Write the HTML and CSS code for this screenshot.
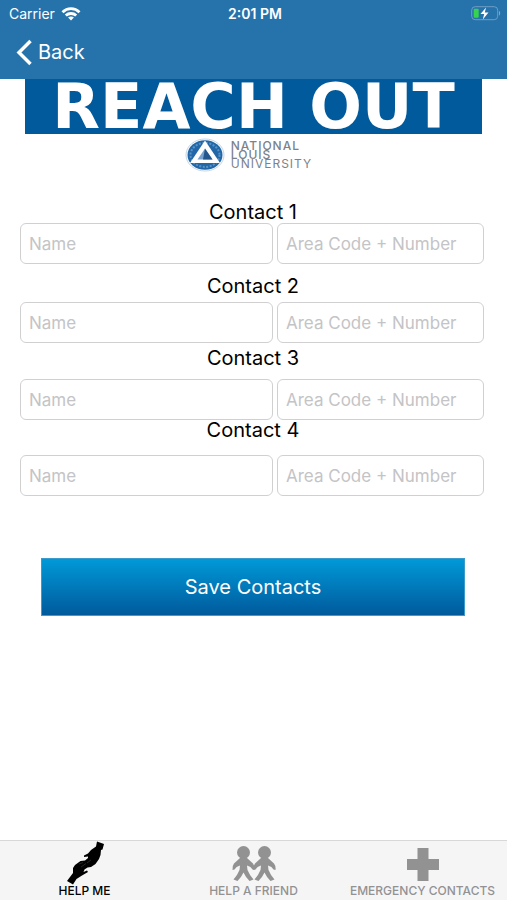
FILE: index.html
```html
<!DOCTYPE html>
<html lang="en">
<head>
<meta charset="utf-8">
<meta name="viewport" content="width=device-width, initial-scale=1">
<title>Reach Out</title>
<link rel="stylesheet" href="styles.css">
</head>
<body>
<header class="top">
  <div class="status">
    <span class="carrier">Carrier
      <svg width="20" height="14" viewBox="0 0 20 14" aria-hidden="true"><g fill="none" stroke="#fff" stroke-width="2.800"><path d="M1.500 5.200C6.300.5 13.700.5 18.500 5.200"/><path d="M4.800 8.600C7.700 5.800 12.300 5.800 15.200 8.600"/></g><path fill="#fff" d="M7.100 10.600C8.800 9.200 11.200 9.200 12.900 10.600L10 13.500Z"/></svg>
    </span>
    <time class="clock">2:01 PM</time>
    <svg class="battery" width="30" height="15" viewBox="0 0 30 15" aria-hidden="true"><rect x=".7" y=".7" width="26" height="13" rx="3.500" fill="none" stroke="#6f9dc4"/><path d="M28 5v4.500c1.500-.5 1.500-4 0-4.500Z" fill="#7fa9cc"/><rect x="2.700" y="2.700" width="5" height="9" rx="1" fill="#35d350"/><path d="M15 1.500 9.500 8h3.700l-1.400 5.500L17.500 6.500h-3.700Z" fill="#fff"/></svg>
  </div>
  <nav><a class="back" href="#"><svg width="17" height="27" viewBox="0 0 17 27" aria-hidden="true"><path d="M14.500 2 3 13.500 14.500 25" fill="none" stroke="#fff" stroke-width="3.500"/></svg>Back</a></nav>
</header>
<main>
  <h1 class="banner">REACH OUT</h1>
  <div class="brand">
    <svg width="40" height="34" viewBox="0 0 40 34" aria-hidden="true"><ellipse cx="20" cy="17" rx="19" ry="16" fill="#fff" stroke="#c3d6e6"/><ellipse cx="20" cy="17" rx="17.500" ry="14.700" fill="#2268a8"/><ellipse cx="20" cy="17" rx="14.500" ry="12" fill="none" stroke="#5c92c3" stroke-width="2" stroke-dasharray="2 1.500"/><path d="M20 2.500 35 25H5Z" fill="#fff"/><path d="M20 10.500 27.500 21.500H12.500Z" fill="#78a3ce"/><path d="M20 10.500 27.500 21.500H18Z" fill="#25578f"/></svg>
    <p class="brand-name"><span class="strong">NATIONAL</span><span class="strong">LOUIS</span><span>UNIVERSITY</span></p>
  </div>
  <form class="contacts">
    <fieldset class="contact">
      <legend>Contact 1</legend>
      <div class="fields"><input type="text" placeholder="Name" aria-label="Contact 1 name"><input type="tel" placeholder="Area Code + Number" aria-label="Contact 1 number"></div>
    </fieldset>
    <fieldset class="contact second">
      <legend>Contact 2</legend>
      <div class="fields"><input type="text" placeholder="Name" aria-label="Contact 2 name"><input type="tel" placeholder="Area Code + Number" aria-label="Contact 2 number"></div>
    </fieldset>
    <fieldset class="contact third">
      <legend>Contact 3</legend>
      <div class="fields"><input type="text" placeholder="Name" aria-label="Contact 3 name"><input type="tel" placeholder="Area Code + Number" aria-label="Contact 3 number"></div>
    </fieldset>
    <fieldset class="contact fourth">
      <legend>Contact 4</legend>
      <div class="fields"><input type="text" placeholder="Name" aria-label="Contact 4 name"><input type="tel" placeholder="Area Code + Number" aria-label="Contact 4 number"></div>
    </fieldset>
    <button class="save" type="submit">Save Contacts</button>
  </form>
</main>
<nav class="tabs">
  <a class="tab active" href="#"><svg width="40" height="44" viewBox="0 0 40 44" aria-hidden="true"><path fill="currentColor" d="M32 .5 39 3 37.500 8.500 36 9 35.500 14 34 18 30.500 23 26 26 22.500 26.500 19.500 28.500 18.500 31 22 29.500 23 31 17 34.500 11.500 38 8 43.500 2 40 8 32 8 27 10 24 15.500 20 20 19.500 23 17 23 15.500 19 16 19 14.500 23 12.500 26 9 31 5.500Z"/><path d="M14 23 18 21.500M16 26 21 22.500M22 22 26 19" fill="none" stroke="#333" stroke-width=".7"/></svg>HELP ME</a>
  <a class="tab" href="#"><svg width="46" height="44" viewBox="0 0 46 44" aria-hidden="true"><g fill="currentColor"><g id="person"><circle cx="12.500" cy="11.500" r="6.500"/><path d="M9 17h7L22 22.500Q24 25 23.500 29L21.500 28.500Q20 25.500 16 24.500L16.500 29Q19 35 22.500 38.500L18.500 40Q14.500 36 12.500 31.500Q10.500 36 6.500 40L2.500 38.500Q6 35 8.500 29L9 24.500Q5 25.500 3.500 28.500L1.500 29Q1 25 3 22.500Z"/></g><use href="#person" x="21"/></g></svg>HELP A FRIEND</a>
  <a class="tab" href="#"><svg width="34" height="44" viewBox="0 0 34 44" aria-hidden="true"><path fill="currentColor" d="M11.500 7h11v11H33v11H22.500v11h-11V29H1V18h10.500Z"/></svg>EMERGENCY CONTACTS</a>
</nav>
</body>
</html>
```
FILE: styles.css
```css
* { box-sizing: border-box; }
body {
  margin: 0;
  min-height: 100vh;
  display: flex;
  flex-direction: column;
  background: #fff;
  color: #000;
  font-family: Inter, "Liberation Sans", sans-serif;
}
a { color: inherit; text-decoration: none; }
.top { background: #2673ab; color: #fff; height: 79px; }
.status {
  display: grid;
  grid-template-columns: 1fr auto 1fr;
  align-items: center;
  height: 27px;
  padding: 0 6px 0 9px;
  font-size: 14px;
}
.carrier { display: flex; align-items: center; gap: 6px; }
.clock { font-weight: 600; }
.battery { justify-self: end; }
.back {
  display: inline-flex;
  align-items: center;
  gap: 5px;
  height: 50px;
  padding-left: 16px;
  font-size: 20px;
}
main { flex: 1; }
.banner {
  margin: 0 25px;
  height: 55px;
  background: #005a9c;
  color: #fff;
  font: bold 62px/56px "DejaVu Sans", sans-serif;
  text-align: center;
  white-space: nowrap;
}
.brand {
  display: flex;
  justify-content: center;
  align-items: center;
  gap: 6px;
  height: 41px;
  margin-right: 10px;
}
.brand-name {
  margin: 0;
  display: grid;
  color: #7b828b;
  font: 12px/9px Inter, sans-serif;
  letter-spacing: 1px;
}
.strong { font-weight: 500; }
.contacts { padding: 27px 23px 0 20px; }
.contact { display: flex; flex-direction: column; margin: 0; padding: 0; border: 0; min-width: 0; }
legend { width: 100%; padding: 0 0 1px 2px; font-size: 20px; line-height: 20px; text-align: center; }
.second { margin-top: 12px; }
.third { margin-top: 5px; }
.second legend { padding-bottom: 6px; }
.third legend { padding-bottom: 11px; }
.fourth legend { padding-bottom: 15px; }
.fields { display: grid; grid-template-columns: 253fr 207fr; gap: 4px; }
input {
  min-width: 0;
  width: 100%;
  height: 41px;
  padding: 0 8px;
  border: 1px solid #d0d0d0;
  border-radius: 6px;
  background: #fff;
  font: 17px Inter, sans-serif;
}
input::placeholder { color: #c4c4c6; opacity: 1; }
.save {
  display: block;
  width: calc(100% - 40px);
  height: 58px;
  margin: 62px 20px 0 21px;
  border: 1px solid #3d9bcb;
  background: linear-gradient(#0099d8, #005a9c);
  color: #fff;
  font: 20px Inter, sans-serif;
}
.tabs {
  display: grid;
  grid-template-columns: repeat(3, 1fr);
  height: 60px;
  border-top: 1px solid #d8d8d8;
  background: #f6f5f6;
}
.tab {
  display: flex;
  flex-direction: column;
  align-items: center;
  color: #929292;
  font-size: 12px;
  line-height: 12px;
  font-weight: 500;
  white-space: nowrap;
}
.active { color: #000; }
```
